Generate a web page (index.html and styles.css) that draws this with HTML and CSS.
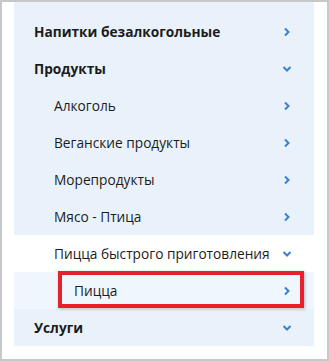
FILE: index.html
```html
<!DOCTYPE html>
<html lang="ru">
<head>
    <meta charset="UTF-8">
    <meta name="viewport" content="width=device-width, initial-scale=1.0">
    <title>Каталог</title>
    <link rel="stylesheet" href="styles.css">
</head>
<body>
    <nav class="catalog">
        <ul class="menu">
            <li class="item level-1">
                <span>Напитки безалкогольные</span>
                <svg class="chevron" viewBox="0 0 10 10"><path d="M3 1.5 L6.5 5 L3 8.5"/></svg>
            </li>
            <li class="item level-1">
                <span>Продукты</span>
                <svg class="chevron" viewBox="0 0 10 10"><path d="M1.5 3 L5 6.5 L8.5 3"/></svg>
            </li>
            <li class="item level-2">
                <span>Алкоголь</span>
                <svg class="chevron" viewBox="0 0 10 10"><path d="M3 1.5 L6.5 5 L3 8.5"/></svg>
            </li>
            <li class="item level-2">
                <span>Веганские продукты</span>
                <svg class="chevron" viewBox="0 0 10 10"><path d="M3 1.5 L6.5 5 L3 8.5"/></svg>
            </li>
            <li class="item level-2">
                <span>Морепродукты</span>
                <svg class="chevron" viewBox="0 0 10 10"><path d="M3 1.5 L6.5 5 L3 8.5"/></svg>
            </li>
            <li class="item level-2">
                <span>Мясо - Птица</span>
                <svg class="chevron" viewBox="0 0 10 10"><path d="M3 1.5 L6.5 5 L3 8.5"/></svg>
            </li>
            <li class="item level-2 open">
                <span>Пицца быстрого приготовления</span>
                <svg class="chevron" viewBox="0 0 10 10"><path d="M1.5 3 L5 6.5 L8.5 3"/></svg>
            </li>
            <li class="item level-3 highlighted">
                <span>Пицца</span>
                <svg class="chevron" viewBox="0 0 10 10"><path d="M3 1.5 L6.5 5 L3 8.5"/></svg>
            </li>
            <li class="item level-1">
                <span>Услуги</span>
                <svg class="chevron" viewBox="0 0 10 10"><path d="M1.5 3 L5 6.5 L8.5 3"/></svg>
            </li>
        </ul>
    </nav>
</body>
</html>
```

FILE: styles.css
```css
:root {
    --panel: #e9f2fb;
    --panel-light: #eff6fd;
    --text: #1c1c1c;
    --accent: #3a7fd6;
    --mark: #e7202b;
}
html, body {
    margin: 0;
    padding: 0;
}
body {
    box-sizing: border-box;
    width: 329px;
    height: 361px;
    border: 2px solid #c8c8c8;
    background: #fff;
    font-family: 'Open Sans', sans-serif;
    font-size: 13.7px;
    color: var(--text);
    overflow: hidden;
}
.catalog {
    width: 300px;
    margin-left: 12px;
    padding-top: 11px;
    background: var(--panel);
}
.menu {
    list-style: none;
    margin: 0;
    padding: 0;
}
.item {
    position: relative;
    display: flex;
    align-items: center;
    justify-content: space-between;
    height: 37px;
    padding-right: 22px;
}
.level-1 {
    padding-left: 20px;
    font-weight: 700;
}
.level-2 {
    padding-left: 40px;
}
.level-3 {
    padding-left: 60px;
}
.open {
    background: #fff;
}
.highlighted {
    background: var(--panel-light);
}
.highlighted::after {
    content: "";
    position: absolute;
    top: -1px;
    left: 44px;
    right: 10px;
    height: 37px;
    box-sizing: border-box;
    border: 4px solid var(--mark);
    box-shadow: 1px 1px 3px rgba(0, 0, 0, 0.25);
}
.chevron {
    width: 10px;
    height: 10px;
    fill: none;
    stroke: var(--accent);
    stroke-width: 2;
}
```
